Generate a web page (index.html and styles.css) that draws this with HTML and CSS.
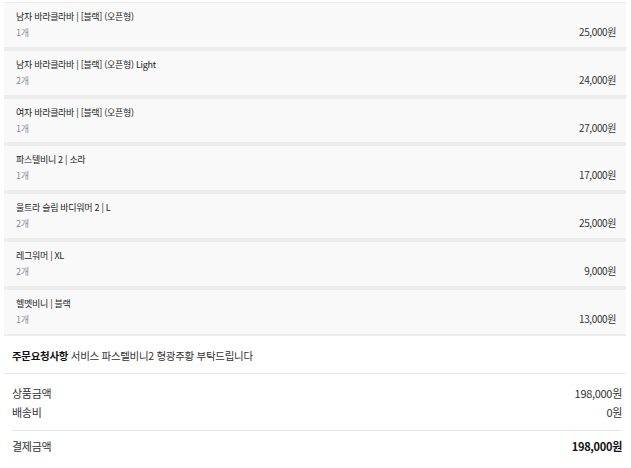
FILE: index.html
```html
<!DOCTYPE html>
<html lang="ko">
<head>
<meta charset="utf-8">
<link rel="stylesheet" href="styles.css">
</head>
<body>
<div class="order">
  <ul class="items">
    <li class="item"><div class="info"><div class="name">남자 바라클라바 | [블랙] (오픈형)</div><div class="qty">1개</div></div><div class="price">25,000원</div></li>
    <li class="item"><div class="info"><div class="name">남자 바라클라바 | [블랙] (오픈형) Light</div><div class="qty">2개</div></div><div class="price">24,000원</div></li>
    <li class="item"><div class="info"><div class="name">여자 바라클라바 | [블랙] (오픈형)</div><div class="qty">1개</div></div><div class="price">27,000원</div></li>
    <li class="item"><div class="info"><div class="name">파스텔비니 2 | 소라</div><div class="qty">1개</div></div><div class="price">17,000원</div></li>
    <li class="item"><div class="info"><div class="name">울트라 슬림 바디워머 2 | L</div><div class="qty">2개</div></div><div class="price">25,000원</div></li>
    <li class="item"><div class="info"><div class="name">레그워머 | XL</div><div class="qty">2개</div></div><div class="price">9,000원</div></li>
    <li class="item"><div class="info"><div class="name">헬멧비니 | 블랙</div><div class="qty">1개</div></div><div class="price">13,000원</div></li>
  </ul>
  <div class="request"><strong>주문요청사항</strong> 서비스 파스텔비니2 형광주황 부탁드립니다</div>
  <div class="summary">
    <div class="row"><span>상품금액</span><span>198,000원</span></div>
    <div class="row"><span>배송비</span><span>0원</span></div>
    <div class="row total"><span>결제금액</span><span>198,000원</span></div>
  </div>
</div>
</body>
</html>
```
FILE: styles.css
```css
* { box-sizing: border-box; }
html, body { margin: 0; padding: 0; background: #fff; }
body {
  font-family: "Noto Sans CJK KR", "Noto Sans", sans-serif;
  color: #222;
}
.order { padding: 2px 5px 0 4px; }
.items {
  list-style: none;
  margin: 0;
  padding: 0;
  border-top: 1px solid #ececec;
  display: flex;
  flex-direction: column;
  gap: 4px;
  background: #ececec;
  border-bottom: 2px solid #ececec;
}
.item {
  background: #f9f9f9;
  height: 43.8px;
  padding: 7px 10px 0 12px;
  display: flex;
  justify-content: space-between;
  align-items: flex-start;
}
.name { font-size: 9px; line-height: 13px; color: #222; letter-spacing: -0.3px; }
.qty { font-size: 9px; line-height: 17px; margin-top: 1px; color: #8a9099; letter-spacing: -0.3px; }
.price { font-size: 10px; line-height: 17px; margin-top: 13px; color: #333; letter-spacing: -0.4px; }
.request {
  font-size: 10.5px;
  padding: 12px 0 9px 8px;
  line-height: 16px;
  border-bottom: 1px solid #e6e6e6;
  color: #333;
  letter-spacing: -0.3px;
}
.request strong { color: #111; }
.summary { padding: 10px 4px 0 8px; }
.row {
  display: flex;
  justify-content: space-between;
  font-size: 11px;
  line-height: 19px;
  color: #333;
  letter-spacing: -0.3px;
}
.row.total {
  border-top: 1px solid #e6e6e6;
  margin-top: 8px;
  padding-top: 6px;
}
.row.total span:last-child { font-weight: bold; color: #111; }
```
